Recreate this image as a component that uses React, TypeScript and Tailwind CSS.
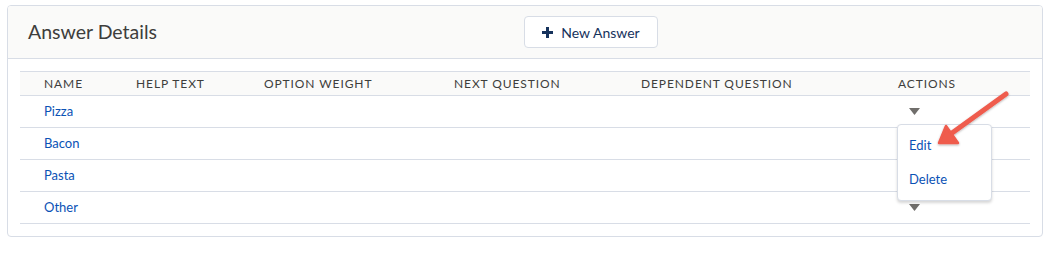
import React from "react";

const cols = [
  { label: "NAME", w: "w-[92px]" },
  { label: "HELP TEXT", w: "w-[128px]" },
  { label: "OPTION WEIGHT", w: "w-[190px]" },
  { label: "NEXT QUESTION", w: "w-[187px]" },
  { label: "DEPENDENT QUESTION", w: "w-[257px]" },
  { label: "ACTIONS", w: "flex-1" },
];

const rows = ["Pizza", "Bacon", "Pasta", "Other"];

function Caret() {
  return (
    <svg width="11" height="7" viewBox="0 0 11 7" className="block">
      <path d="M0 0 L11 0 L5.5 7 Z" fill="#706e6b" />
    </svg>
  );
}

export default function App() {
  return (
    <div className="w-[1044px] h-[269px] bg-white pt-[5px] pl-[7px] relative" style={{ fontFamily: "Lato, 'Noto Sans', sans-serif" }}>
      <div className="w-[1036px] h-[232px] border border-[#d8dde6] rounded-[4px] bg-white overflow-hidden">
        <div className="h-[53px] bg-[#fafaf9] border-b border-[#d8dde6] flex items-center relative">
          <div className="pl-[20px] text-[19.5px] text-[#3e3e3c] font-normal">Answer Details</div>
          <div className="absolute left-[516px] top-[10px] w-[134px] h-[32px] border border-[#d8dde6] rounded-[4px] bg-white flex items-center justify-center gap-[8px] text-[14px] text-[#16325c]">
            <svg width="11" height="11" viewBox="0 0 11 11">
              <path d="M4 0 H7 V4 H11 V7 H7 V11 H4 V7 H0 V4 H4 Z" fill="#16325c" />
            </svg>
            <span>New Answer</span>
          </div>
        </div>
        <div className="mx-[12px] mt-[12px] w-[1010px]">
          <div className="h-[25px] bg-[#fafaf9] border-y border-[#d8dde6] flex items-center pl-[24px] text-[12px] tracking-[0.9px]">
            {cols.map((c) => (
              <div key={c.label} className={`${c.w} text-[#3e3e3c]`}>{c.label}</div>
            ))}
          </div>
          {rows.map((r, i) => (
            <div key={r} className="h-[32px] border-b border-[#d8dde6] flex items-center pl-[24px] text-[13px] text-[#0a52b5]">
              <div className="w-[854px]">{r}</div>
              {(i === 0 || i === 3) && (
                <div className="pl-[11px]"><Caret /></div>
              )}
            </div>
          ))}
        </div>
      </div>
      <div className="absolute left-[897px] top-[124px] w-[95px] h-[77px] bg-white border border-[#d8dde6] rounded-[4px] shadow-[0_2px_3px_rgba(0,0,0,0.16)] flex flex-col pl-[11px] pt-[12px] gap-[18px] text-[13px] text-[#0a52b5]">
        <div className="leading-[16px]">Edit</div>
        <div className="leading-[16px]">Delete</div>
      </div>
      <svg className="absolute left-0 top-0" width="1044" height="269" viewBox="0 0 1044 269">
        <defs>
          <filter id="sh" x="-20%" y="-20%" width="140%" height="140%">
            <feDropShadow dx="0" dy="1" stdDeviation="1" floodColor="#000" floodOpacity="0.3" />
          </filter>
        </defs>
        <g filter="url(#sh)">
          <line x1="1006" y1="94" x2="952" y2="133" stroke="#ef5b4d" strokeWidth="5" strokeLinecap="round" />
          <path d="M939 143 L946 126 L958 143 Z" fill="#ef5b4d" stroke="#ef5b4d" strokeWidth="2.5" strokeLinejoin="round" />
        </g>
      </svg>
    </div>
  );
}
